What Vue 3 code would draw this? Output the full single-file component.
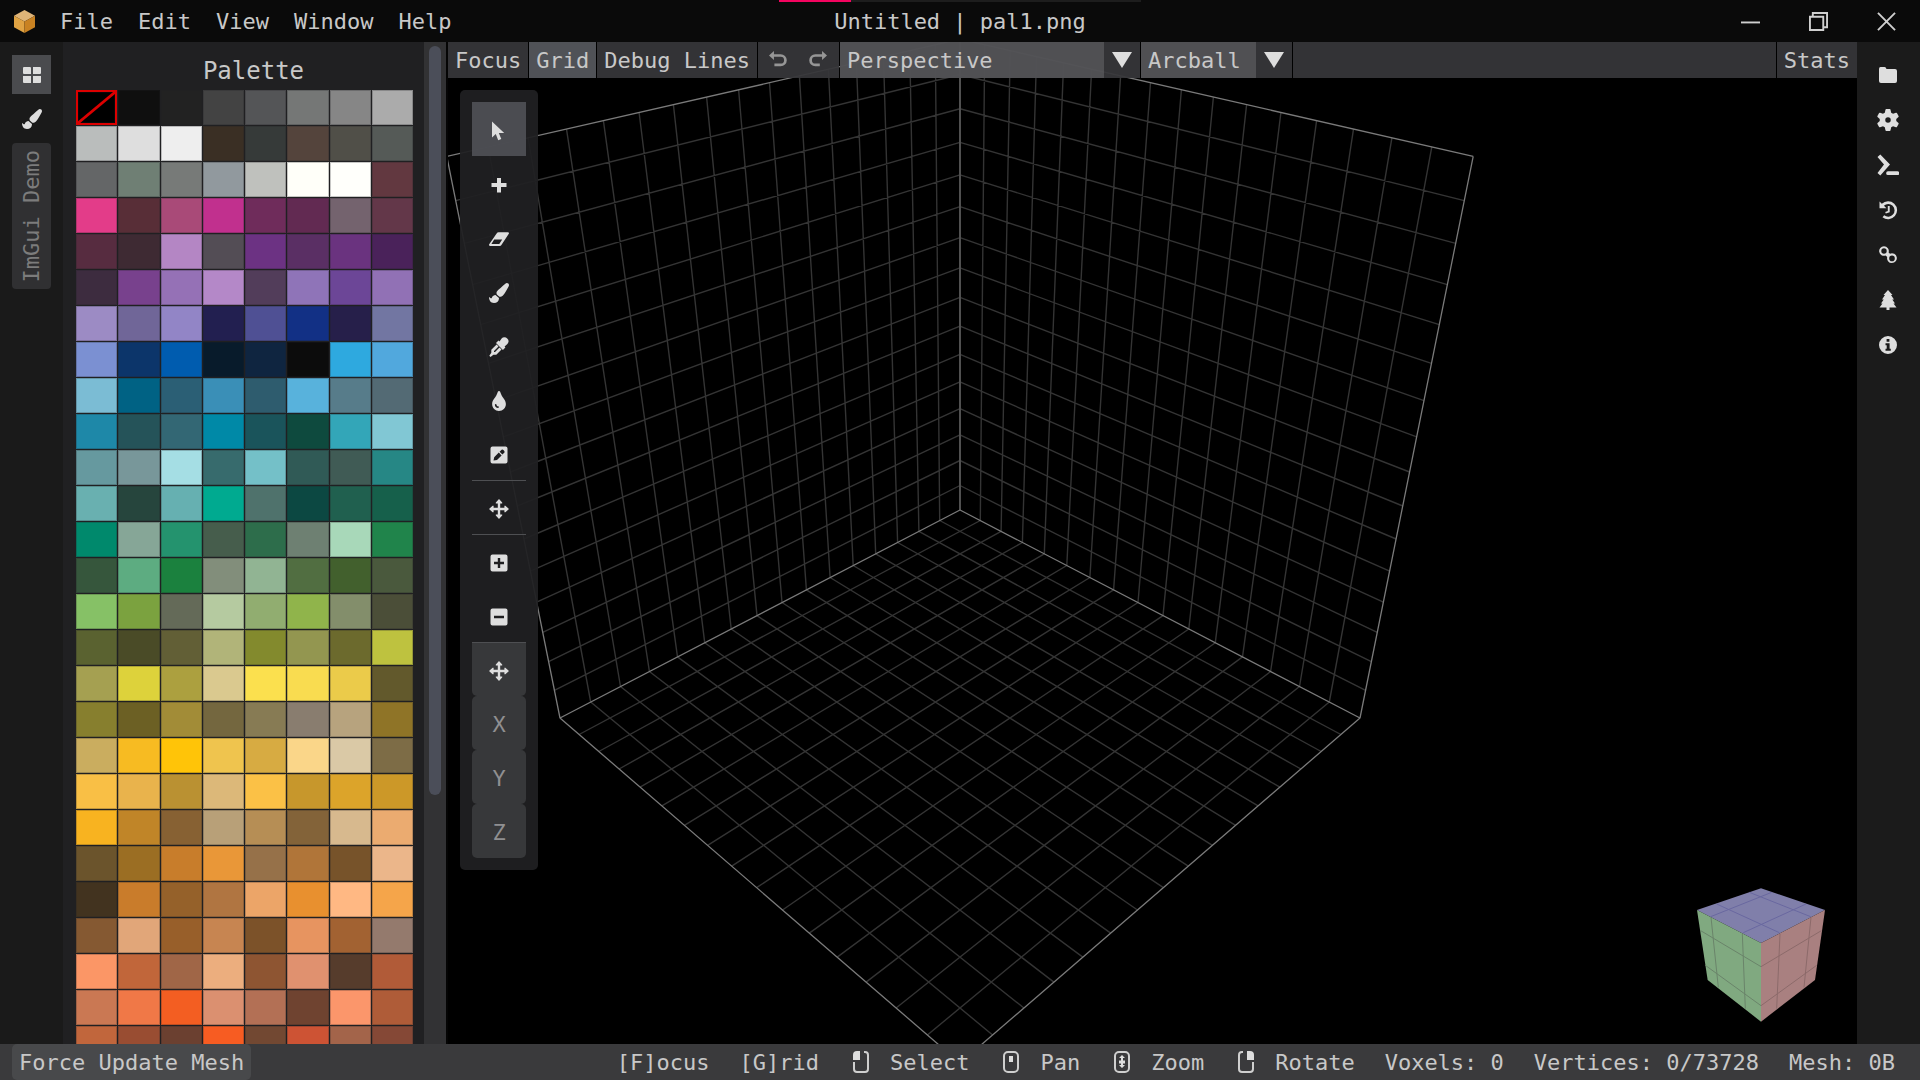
<script setup>
import { ref } from 'vue'

const menus = ['File', 'Edit', 'View', 'Window', 'Help']

// 8 swatches per row
const palette = `
000000 0f0f0f 222222 434343 545557 757776 868686 ababab
babdbc dedede eeeeee 3a2f24 363a39 54443c 504f48 555a57
646667 6f7f74 777a78 91999e bfc1bd fffff9 fffffb 623840
e33c89 582e37 a94a78 c1308e 6f2c5b 622a52 74636e 633749
572c40 3e2a33 b486c4 534d55 6c3283 5a2f64 6a337f 4a225a
3d2c3f 78418d 9571b6 b488c8 523d5a 8f74b8 6c4697 9171b5
9c8bc4 706698 9285c6 221f50 4f5094 123085 261f4a 7276a2
7b90d2 0c356a 005caf 081b2b 0f2540 0c0c0c 2ea9df 51a8dd
7bbcd4 006284 2b5f75 3a8fb7 2e5c6e 58b2dc 577c8a 536a74
1e88a8 255359 336774 0089a7 1a545b 0e4a3e 33a6b8 81c7d4
66999f 78979a a5dee4 376b6d 74c0c8 305a56 405b55 268785
69b0b0 26453d 66b0b1 00aa90 4f726c 0c4842 20604f 16604b
00896c 86a697 24936e 465d4c 2d6d4b 6e8072 a8d8b9 20844b
36563c 5dac81 1b813e 828e7b 91b493 516e41 42602d 4a593d
86c166 7ba23f 646a58 b5caa0 91ad70 90b44b 838e6b 4b4e38
5a6230 4a4b27 625f36 b1b479 838a2d 939650 6c6a2d bec23f
a5a051 ddd23b aca03f dac98f fbe04e f9dc50 ebcb4a 62592c
877f2e 6c6024 a28c37 74673f 877b54 897d6f b7a37e 8f7427
caad5f f7bb22 ffc408 efc44e d7ab42 fad689 dac9a6 7d6c46
f9bf45 e9b34c ba9132 dcb879 fbc146 c7972c dca42a cc9828
f8b320 c08528 876133 b8a078 b68e55 836339 d7b98e ebab70
6b542c 9b6e23 c87d2b e99738 967149 b07539 77532a ebb68a
42331f c97c2b 95612a b07541 eca568 e8902f ffb883 f5a54a
855932 e1a679 985f2a c78551 7c5229 e79460 a26232 947a6d
fb9666 c1663a a06647 ecae7e 8e5532 e0916f 563c2c b15b38
ca7853 f07847 f35e22 db9070 b37055 6f4330 fb966b af5c38
c1663c 994d32 6b4030 f75c22 724832 cd5334 a3644a 854836
`.trim().split(/\s+/).map(hex => '#' + hex)

const icons = {
  windows: ['0 0 20 20', 'M2 2h6a1 1 0 0 1 1 1v6H2a1 1 0 0 1-1-1V3a1 1 0 0 1 1-1zM11 2h7a1 1 0 0 1 1 1v5a1 1 0 0 1-1 1h-7zM1 11h8v7H2a1 1 0 0 1-1-1zM11 11h8v6a1 1 0 0 1-1 1h-7z'],
  brush: ['0 0 512 512', 'M167.02 309.34c-40.12 2.58-76.53 17.86-97.19 72.3-2.35 6.21-8 9.98-14.59 9.98-11.11 0-45.46-27.67-55.25-34.35C0 439.62 37.93 512 128 512c75.86 0 128-43.77 128-120.19 0-3.11-.65-6.08-.97-9.13l-88.01-73.34zM457.89 0c-15.16 0-29.37 6.71-40.21 16.45C213.27 199.05 192 203.34 192 257.09c0 13.7 3.25 26.76 8.73 38.7l63.82 53.18c7.21 1.8 14.64 3.03 22.39 3.03 62.11 0 98.11-45.47 211.16-256.46 7.38-14.35 13.9-29.85 13.9-45.99C512 20.64 486 0 457.89 0z'],
  pointer: ['-1 0 20 20', 'M2 0.500V16.500L5.800 13L8.200 19.300L11.300 18L8.800 12H14.200Z'],
  plus: ['0 0 20 20', 'M8 3h4v5h5.500v4H12v5.500H8V12H2.500V8H8z'],
  eraser: ['0 0 20 20', 'M9.500 3.200H19a1 1 0 0 1 .8 1.600L12.400 16a2 2 0 0 1-1.600.9H1a1 1 0 0 1-.8-1.600L7.800 4.200a2 2 0 0 1 1.700-1zM5.200 10.600L2.400 15H10.300L13.200 10.600z'],
  dropper: ['0 0 20 20', 'M12.600 1.500a3.700 3.700 0 0 1 5.600 0a3.900 3.900 0 0 1 .2 5.400L15.600 9.500L16.400 10.500L13.900 13L7 6.100L9.500 3.600L10.500 4.400zM7.600 7.500L2.300 12.800V15.800L.3 18.700L1.500 19.900L4.400 17.800H7.300L12.500 12.500L10.500 10.500L6 15H5V14L9.500 9.500z'],
  drop: ['0 0 352 512', 'M205.22 22.09c-7.94-28.78-49.44-30.12-58.44 0C100.01 179.85 0 222.72 0 333.91 0 432.35 78.72 512 176 512s176-79.65 176-178.09c0-111.75-99.79-153.34-146.78-311.82zM150 435c-45 0-80-38-80-84 0-28 40-28 44 0 4 26 18 38 40 42 26 6 22 42-4 42z'],
  edit: ['0 0 20 20', 'M3.500 1.500h13a2 2 0 0 1 2 2v13a2 2 0 0 1-2 2h-13a2 2 0 0 1-2-2v-13a2 2 0 0 1 2-2zM4.500 15.500L8 15L12.600 10.400L9.800 7.600L5.200 12.200zM10.600 6.800L13.400 9.600L15.500 7.500Q16 6.500 14.700 5.200Q13.500 4 12.600 4.800z'],
  move: ['0 0 20 20', 'M10 0L13.200 3.600V4.600H11.200V8.800H15.400V6.800H16.400L20 10L16.400 13.200H15.400V11.200H11.200V15.400H13.200V16.400L10 20L6.800 16.400V15.400H8.800V11.200H4.600V13.200H3.600L0 10L3.600 6.800H4.600V8.800H8.800V4.600H6.800V3.600z'],
  plusBox: ['0 0 20 20', 'M3.500 1.500h13a2 2 0 0 1 2 2v13a2 2 0 0 1-2 2h-13a2 2 0 0 1-2-2v-13a2 2 0 0 1 2-2zM8.800 5V8.800H5V11.200H8.800V15H11.200V11.200H15V8.800H11.200V5z'],
  minusBox: ['0 0 20 20', 'M3.500 1.500h13a2 2 0 0 1 2 2v13a2 2 0 0 1-2 2h-13a2 2 0 0 1-2-2v-13a2 2 0 0 1 2-2zM5 8.800V11.200H15V8.800z'],
  folder: ['0 0 20 20', 'M2.500 2H6.500Q8 2 8.500 4H17Q19 4 19 6V16Q19 18 17 18H3Q1 18 1 16V4Q1 2 2.500 2z'],
  gear: ['1 0 18 20', 'M8.400 0h3.200q.6 0 .7.6l.6 2.700 1.700 1 2.600-.9q.6-.2.900.3l1.500 2.600q.3.500-.1.900L17.500 9v2l2 1.800q.4.400.1.900L18.100 16.300q-.3.500-.9.300l-2.600-.9-1.700 1-.6 2.700q-.1.600-.7.600H8.400q-.6 0-.7-.6l-.6-2.700-1.700-1-2.600.9q-.6.200-.9-.3L.4 13.700q-.3-.5.100-.9L2.500 11V9L.5 7.200q-.4-.4-.1-.9L1.900 3.700q.3-.5.9-.3l2.600.9 1.700-1 .6-2.700q.1-.6.7-.6zM10 7.500a2.500 2.500 0 1 0 0 5a2.500 2.500 0 0 0 0-5z'],
  terminal: ['0 0 22 22', 'M.5 3L3.300 .5L13 10.500L3.300 21.500L.5 19L7 10.500zM11 17.300h9.500a1 1 0 0 1 0 3.700H11a1 1 0 0 1 0-3.700z'],
  history: ['0 0 20 20', 'M1.500 1.500L3.800 3.800A9 9 0 1 1 4.500 17.300L6.200 15.200A6.300 6.300 0 1 0 5.900 5.800L8.500 8.200H1.500zM9.800 6H11.700V12.200L7.800 13.400L7.200 11.900L9.800 11z'],
  link: ['0 0 20 20', 'M6 1.200a4.800 4.800 0 0 1 4.600 6.200l1.400 1.300a4.900 4.900 0 1 1-2.800 3.300L7.600 10.500A4.800 4.800 0 1 1 6 1.200zM6 3.300a2.700 2.700 0 1 0 0 5.400a2.700 2.700 0 0 0 0-5.400zM14 10.600a2.800 2.800 0 1 0 0 5.600a2.800 2.800 0 0 0 0-5.600z'],
  tree: ['0 0 20 20', 'M10 0L14.500 5H13L16 9.500H14.300L17 13.500H15.500L18.500 17.500H11.500V20H8.500V17.500H1.500L4.500 13.500H3L5.700 9.500H4L7 5H5.500z'],
  info: ['0 0 20 20', 'M10 1a9 9 0 1 0 0 18a9 9 0 0 0 0-18zM8.600 4H11.400V6.700H8.600zM7.500 8.200H11.600V13.700H12.800V15.700H7.500V13.700H8.700V10.200H7.500z'],
  undo: ['0 0 20 20', 'M0 5L5.500 0V3.500H13A6.700 6.700 0 0 1 13 17H6V14H13A3.700 3.700 0 0 0 13 6.500H5.500V10z'],
  redo: ['0 0 20 20', 'M20 5L14.500 0V3.500H7A6.700 6.700 0 0 0 7 17H12V14H7A3.700 3.700 0 0 1 7 6.500H14.500V10z'],
}

const tools = [
  { name: 'Select', icon: 'pointer' },
  { name: 'Add', icon: 'plus' },
  { name: 'Erase', icon: 'eraser' },
  { name: 'Paint', icon: 'brush' },
  { name: 'Pick color', icon: 'dropper' },
  { name: 'Fill', icon: 'drop' },
  { name: 'Edit', icon: 'edit' },
  { name: 'Move', icon: 'move', line: true },
  { name: 'Add box', icon: 'plusBox', line: true },
  { name: 'Remove box', icon: 'minusBox' },
  { name: 'Free axis', icon: 'move', line: true, axis: true },
  { name: 'X', axis: true },
  { name: 'Y', axis: true },
  { name: 'Z', axis: true },
]

const panels = [
  { name: 'Files', icon: 'folder' },
  { name: 'Settings', icon: 'gear' },
  { name: 'Console', icon: 'terminal' },
  { name: 'History', icon: 'history' },
  { name: 'Links', icon: 'link' },
  { name: 'Scene tree', icon: 'tree' },
  { name: 'About', icon: 'info' },
]

const hints = [
  { text: '[F]ocus' },
  { text: '[G]rid' },
  { text: 'Select', mouse: 'left' },
  { text: 'Pan', mouse: 'middle' },
  { text: 'Zoom', mouse: 'scroll' },
  { text: 'Rotate', mouse: 'right' },
  { text: 'Voxels: 0' },
  { text: 'Vertices: 0/73728' },
  { text: 'Mesh: 0B' },
]

const tool = ref('Select')
const color = ref(0)
const showGrid = ref(true)
const camera = ref('Perspective')
const control = ref('Arcball')

// projects a point of the unit cube, l and r run along the floor, u goes up
const project = (l, r, u) => {
  const w = 1 - 0.1986 * (l + r) - 0.1767 * u
  const x = 960 + (320.6 * (r - l)) / w
  const y = 510 + (166.7 * (l + r) - 387.6 * u) / w
  return `${x.toFixed(1)} ${y.toFixed(1)}`
}
const line = (a, b) => `M${project(...a)}L${project(...b)}`

const size = 16
let cells = ''
for (let i = 1; i < size; i++) {
  const t = i / size
  cells += line([t, 0, 0], [t, 1, 0]) + line([0, t, 0], [1, t, 0])
  cells += line([t, 0, 0], [t, 0, 1]) + line([0, 0, t], [1, 0, t])
  cells += line([0, t, 0], [0, t, 1]) + line([0, 0, t], [0, 1, t])
}
const edges = [
  line([0, 0, 0], [1, 0, 0]), line([0, 0, 0], [0, 1, 0]),
  line([1, 0, 0], [1, 1, 0]), line([0, 1, 0], [1, 1, 0]),
  line([1, 0, 0], [1, 0, 1]), line([0, 1, 0], [0, 1, 1]),
  line([0, 0, 1], [1, 0, 1]), line([0, 0, 1], [0, 1, 1]),
].join('')
const corner = line([0, 0, 0], [0, 0, 1])
</script>

<template>
  <div class="app">
    <header class="titlebar">
      <div class="progress"><span></span></div>
      <nav class="menu">
        <svg class="logo" viewBox="0 0 22 24">
          <path d="M11 0L22 6L11 12L0 6z" fill="#dfb478" />
          <path d="M0 6L11 12V24L0 18z" fill="#e0a343" />
          <path d="M22 6L11 12V24L22 18z" fill="#c98222" />
        </svg>
        <button v-for="menu in menus" :key="menu">{{ menu }}</button>
      </nav>
      <h1>Untitled | pal1.png</h1>
      <div class="window-buttons">
        <button aria-label="Minimize">
          <svg viewBox="0 0 20 20"><path d="M0 11H20" /></svg>
        </button>
        <button aria-label="Restore">
          <svg viewBox="0 0 20 20"><path d="M1 5H15V19H1zM4 4V1H19V16H16" /></svg>
        </button>
        <button aria-label="Close">
          <svg viewBox="0 0 20 20"><path d="M1 1L19 19M19 1L1 19" /></svg>
        </button>
      </div>
    </header>

    <main class="workspace">
      <aside class="left-tabs">
        <button class="tab active" aria-label="Palette">
          <svg :viewBox="icons.windows[0]"><path :d="icons.windows[1]" /></svg>
        </button>
        <button class="tab" aria-label="Brush">
          <svg :viewBox="icons.brush[0]"><path :d="icons.brush[1]" /></svg>
        </button>
        <button class="demo"><span>ImGui Demo</span></button>
      </aside>

      <section class="palette">
        <h2>Palette</h2>
        <div class="swatches">
          <button
            v-for="(item, index) in palette"
            :key="index"
            class="swatch"
            :class="{ selected: index === color }"
            :style="{ backgroundColor: item }"
            :aria-label="item"
            @click="color = index"
          >
            <svg v-if="index === color" viewBox="0 0 40 34" preserveAspectRatio="none">
              <path d="M0 34L40 0" />
            </svg>
          </button>
        </div>
      </section>
      <div class="scrollbar"><span></span></div>

      <section class="viewport">
        <svg v-if="showGrid" class="scene" viewBox="448 42 1409 1002" preserveAspectRatio="xMidYMid slice">
          <path class="cells" :d="cells" />
          <path class="corner" :d="corner" />
          <path class="edges" :d="edges" />
        </svg>

        <div class="toolbar">
          <button>Focus</button>
          <button :class="{ active: showGrid }" @click="showGrid = !showGrid">Grid</button>
          <button>Debug Lines</button>
          <div class="undo-group">
            <button aria-label="Undo">
              <svg :viewBox="icons.undo[0]"><path :d="icons.undo[1]" /></svg>
            </button>
            <button aria-label="Redo">
              <svg :viewBox="icons.redo[0]"><path :d="icons.redo[1]" /></svg>
            </button>
          </div>
          <label class="combo camera">
            <select v-model="camera" aria-label="Camera">
              <option>Perspective</option>
              <option>Orthographic</option>
            </select>
            <svg viewBox="0 0 20 16"><path d="M0 0H20L10 16z" /></svg>
          </label>
          <label class="combo control">
            <select v-model="control" aria-label="Control">
              <option>Arcball</option>
              <option>Fly</option>
            </select>
            <svg viewBox="0 0 20 16"><path d="M0 0H20L10 16z" /></svg>
          </label>
          <div class="filler"></div>
          <button>Stats</button>
        </div>

        <div class="tools">
          <button
            v-for="item in tools"
            :key="item.name"
            :class="{ active: item.name === tool, line: item.line, axis: item.axis }"
            :aria-label="item.name"
            @click="tool = item.name"
          >
            <svg v-if="item.icon" :viewBox="icons[item.icon][0]"><path :d="icons[item.icon][1]" /></svg>
            <span v-else>{{ item.name }}</span>
          </button>
        </div>

        <svg class="nav-cube" viewBox="111 85 384 400">
          <path d="M303 85L495 150L303 249L111 150z" fill="#807faa" />
          <path d="M111 150L303 249V485L143 360z" fill="#80a980" />
          <path d="M495 150L303 249V485L465 360z" fill="#a98080" />
          <path d="M170 132L358 218M268 97L452 170M335 97L152 170M438 132L250 218" stroke="#6968a0" />
          <path d="M153 172L175 382M247 222L256 446M122 212L303 320M136 316L303 437" stroke="#6a846a" />
          <path d="M453 172L432 382M360 222L350 446M484 212L303 320M470 316L303 437" stroke="#8c6a6a" />
        </svg>
      </section>

      <aside class="right-tabs">
        <button v-for="panel in panels" :key="panel.name" :aria-label="panel.name">
          <svg :class="panel.icon" :viewBox="icons[panel.icon][0]"><path :d="icons[panel.icon][1]" /></svg>
        </button>
      </aside>
    </main>

    <footer class="statusbar">
      <button>Force Update Mesh</button>
      <ul>
        <li v-for="hint in hints" :key="hint.text">
          <svg v-if="hint.mouse" viewBox="0 0 24 24">
            <path v-if="hint.mouse === 'left'" class="outline" d="M5 12V19Q5 22 8 22H16Q19 22 19 19V5Q19 2 16 2H15" />
            <path v-else-if="hint.mouse === 'right'" class="outline" d="M9 2H8Q5 2 5 5V19Q5 22 8 22H16Q19 22 19 19V12" />
            <rect v-else class="outline" x="5" y="2" width="14" height="20" rx="4" />
            <path v-if="hint.mouse === 'left'" d="M4 10V5Q4 1 8 1H11V10z" />
            <path v-if="hint.mouse === 'right'" d="M20 10V5Q20 1 16 1H13V10z" />
            <rect v-if="hint.mouse === 'middle'" x="10" y="6" width="4" height="6" />
            <path v-if="hint.mouse === 'scroll'" d="M12 5L15 8H13V10.500H15V13.500H13V15H15L12 18L9 15H11V13.500H9V10.500H11V8H9z" />
          </svg>
          <span>{{ hint.text }}</span>
        </li>
      </ul>
    </footer>
  </div>
</template>

<style>
body {
  margin: 0;
  background: #000;
}
</style>

<style scoped>
.app {
  display: flex;
  flex-direction: column;
  height: 100vh;
  overflow: hidden;
  color: #c8c8c8;
  font-family: "DejaVu Sans Mono", monospace;
  font-size: 22px;
  line-height: 34px;
}

button,
select {
  margin: 0;
  padding: 0;
  border: none;
  background: none;
  color: inherit;
  font: inherit;
  cursor: pointer;
}

svg {
  display: block;
  flex: none;
  fill: #dedede;
  fill-rule: evenodd;
}

.titlebar {
  position: relative;
  display: grid;
  grid-template-columns: 1fr auto 1fr;
  align-items: center;
  height: 42px;
  flex: none;
  background: #0a0a0a;
}

.progress {
  position: absolute;
  top: 0;
  left: 50%;
  width: 362px;
  height: 2px;
  margin-left: -181px;
  background: #1d1d1d;
}

.progress span {
  display: block;
  width: 20%;
  height: 100%;
  background: #f4045f;
}

.menu {
  display: flex;
  align-items: center;
  gap: 25px;
  padding-left: 14px;
}

.menu button,
h1 {
  padding-top: 2px;
}

.logo {
  width: 21px;
  height: 23px;
}

h1,
h2 {
  margin: 0;
  font-weight: normal;
}

h1 {
  font-size: 22px;
}

.window-buttons {
  display: flex;
  justify-content: flex-end;
}

.window-buttons button {
  display: grid;
  place-items: center;
  width: 68px;
  height: 42px;
}

.window-buttons svg {
  width: 19px;
  height: 19px;
  fill: none;
  stroke: #cfcfcf;
  stroke-width: 2;
}

.workspace {
  display: grid;
  grid-template-columns: 63px 361px 24px 1fr 63px;
  flex: 1;
  min-height: 0;
}

.left-tabs {
  display: flex;
  flex-direction: column;
  align-items: center;
  gap: 5px;
  padding-top: 13px;
  background: #1a1a1a;
}

.tab {
  display: grid;
  place-items: center;
  width: 39px;
  height: 39px;
}

.tab svg {
  width: 20px;
  height: 20px;
}

.tab.active {
  background: #4a4b4e;
}

.demo {
  width: 39px;
  padding: 7px 0;
  border-radius: 4px;
  background: #303032;
  color: #7c7c7c;
}

.demo span {
  display: block;
  writing-mode: vertical-rl;
  transform: rotate(180deg);
  line-height: 39px;
}

.palette {
  display: flex;
  flex-direction: column;
  min-height: 0;
  padding: 12px 11px 0 13px;
  overflow: hidden;
  background: #202022;
}

h2 {
  padding: 0 0 2px 18px;
  font-size: 24px;
  text-align: center;
}

.swatches {
  display: grid;
  grid-template-columns: repeat(8, 1fr);
  grid-auto-rows: 35px;
  gap: 1px;
}

.swatch {
  min-width: 0;
  box-shadow: inset 0 0 0 1px rgba(32, 32, 34, 0.25);
}

.swatch.selected {
  border: 2px solid #dc0000;
}

.swatch svg {
  width: 100%;
  height: 100%;
  stroke: #dc0000;
  stroke-width: 3;
}

.scrollbar {
  display: flex;
  justify-content: center;
  padding: 4px 0 0 0;
  border-right: 2px solid #050505;
  background: #323234;
}

.scrollbar span {
  width: 12px;
  height: 75%;
  border-radius: 6px;
  background: #4b4e59;
}

.viewport {
  position: relative;
  min-width: 0;
  background: #000;
}

.scene {
  position: absolute;
  inset: 0;
  width: 100%;
  height: 100%;
  fill: none;
}

.cells {
  stroke: #343434;
  stroke-width: 1.4;
}

.corner {
  stroke: #505050;
  stroke-width: 2;
}

.edges {
  stroke: #7a7a7a;
  stroke-width: 1.3;
}

.toolbar {
  position: relative;
  display: flex;
  gap: 1px;
  height: 36px;
}

.toolbar > * {
  background: rgba(54, 54, 57, 0.94);
}

.toolbar > button {
  padding: 2px 7px 0;
}

.toolbar > button.active {
  background: rgba(85, 87, 92, 0.94);
}

.undo-group {
  display: flex;
  justify-content: center;
  gap: 22px;
  width: 81px;
}

.undo-group svg {
  width: 18px;
  height: 18px;
  fill: #969696;
}

.combo {
  display: flex;
  align-items: center;
}

.combo select {
  flex: 1;
  min-width: 0;
  height: 36px;
  padding: 2px 7px 0;
  appearance: none;
  background: rgba(100, 100, 103, 0.6);
}

.combo svg {
  width: 20px;
  height: 16px;
  margin: 0 8px;
}

.camera {
  width: 300px;
}

.control {
  width: 151px;
}

.filler {
  flex: 1;
}

.tools {
  position: absolute;
  top: 48px;
  left: 12px;
  display: flex;
  flex-direction: column;
  padding: 12px;
  border-radius: 5px;
  background: rgba(32, 32, 34, 0.94);
}

.tools button {
  box-sizing: border-box;
  display: grid;
  place-items: center;
  width: 54px;
  height: 54px;
  padding-top: 3px;
  color: #8f8f91;
}

.tools svg {
  width: 20px;
  height: 20px;
}

.tools .axis {
  border-radius: 5px;
  background: #37383a;
}

.tools .line {
  border-top: 1px solid #4e4f52;
  border-radius: 0 0 5px 5px;
}

.tools .active {
  background: rgba(78, 79, 84, 0.95);
}

.nav-cube {
  position: absolute;
  right: 32px;
  bottom: 22px;
  width: 128px;
  height: 134px;
  stroke-width: 3;
}

.right-tabs {
  display: flex;
  flex-direction: column;
  padding-top: 10px;
  background: #1b1b1b;
}

.right-tabs button {
  display: grid;
  place-items: center;
  width: 61px;
  height: 45px;
}

.right-tabs svg {
  width: 20px;
  height: 20px;
}

.right-tabs .gear,
.right-tabs .terminal {
  width: 22px;
  height: 22px;
}

.statusbar {
  display: flex;
  justify-content: space-between;
  flex: none;
  height: 36px;
  padding: 0 25px 0 12px;
  background: #3a3a3c;
}

.statusbar button {
  padding: 2px 7px 0;
  border-radius: 5px;
  background: #48494b;
}

ul {
  display: flex;
  gap: 30px;
  margin: 0;
  padding: 0;
  list-style: none;
}

li {
  display: flex;
  align-items: center;
  gap: 17px;
}

li span {
  padding-top: 2px;
}

li svg {
  width: 24px;
  height: 24px;
}

.outline {
  fill: none;
  stroke: #cfcfcf;
  stroke-width: 2;
}
</style>
